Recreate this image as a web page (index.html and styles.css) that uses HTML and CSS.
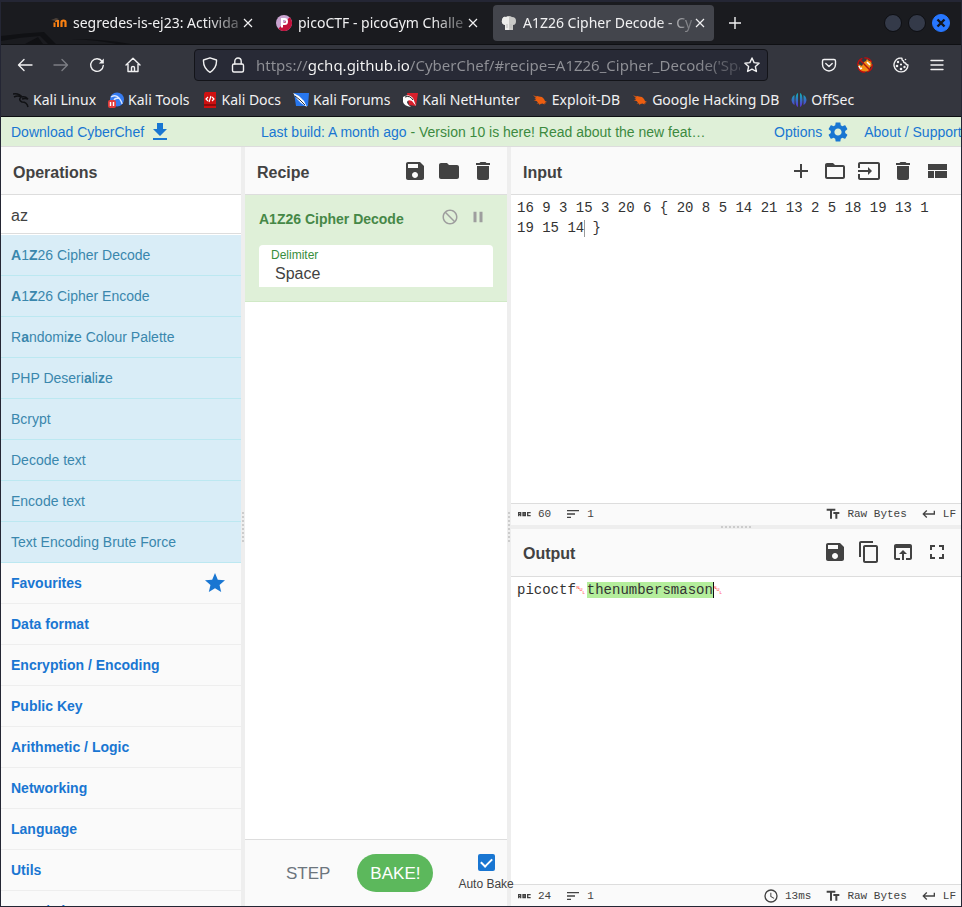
FILE: index.html
```html
<!DOCTYPE html>
<html lang="en">
<head>
<meta charset="utf-8">
<title>A1Z26 Cipher Decode - CyberChef</title>
<link rel="stylesheet" href="styles.css">
</head>
<body>
<svg class="sprite" aria-hidden="true">
  <symbol id="save" viewBox="0 0 24 24"><path d="M17 3H5c-1.11 0-2 .9-2 2v14c0 1.1.89 2 2 2h14c1.1 0 2-.9 2-2V7l-4-4zm-5 16c-1.66 0-3-1.34-3-3s1.34-3 3-3 3 1.34 3 3-1.34 3-3 3zm3-10H5V5h10v4z"/></symbol>
  <symbol id="folder" viewBox="0 0 24 24"><path d="M10 4H4c-1.1 0-1.99.9-1.99 2L2 18c0 1.1.9 2 2 2h16c1.1 0 2-.9 2-2V8c0-1.1-.9-2-2-2h-8l-2-2z"/></symbol>
  <symbol id="trash" viewBox="0 0 24 24"><path d="M6 19c0 1.1.9 2 2 2h8c1.1 0 2-.9 2-2V7H6v12zM19 4h-3.500l-1-1h-5l-1 1H5v2h14V4z"/></symbol>
  <symbol id="add" viewBox="0 0 24 24"><path d="M19 13h-6v6h-2v-6H5v-2h6V5h2v6h6v2z"/></symbol>
  <symbol id="folder-open" viewBox="0 0 24 24"><path d="M20 6h-8l-2-2H4c-1.100 0-1.990.9-1.990 2L2 18c0 1.100.9 2 2 2h16c1.100 0 2-.9 2-2V8c0-1.100-.9-2-2-2zm0 12H4V8h16v10z"/></symbol>
  <symbol id="input-icon" viewBox="0 0 24 24"><path d="M21 3.010H3c-1.100 0-2 .9-2 2V9h2V4.990h18v14.030H3V15H1v4.010c0 1.100.9 1.980 2 1.980h18c1.100 0 2-.88 2-1.980v-14c0-1.110-.9-2-2-2zM11 16l4-4-4-4v3H1v2h10v3z"/></symbol>
  <symbol id="layout" viewBox="0 0 24 24"><path d="M3 19h6v-7H3v7zm7 0h12v-7H10v7zM3 5v6h19V5H3z"/></symbol>
  <symbol id="copy" viewBox="0 0 24 24"><path d="M16 1H4c-1.100 0-2 .9-2 2v14h2V3h12V1zm3 4H8c-1.100 0-2 .9-2 2v14c0 1.100.9 2 2 2h11c1.100 0 2-.9 2-2V7c0-1.100-.9-2-2-2zm0 16H8V7h11v14z"/></symbol>
  <symbol id="open" viewBox="0 0 24 24"><path d="M19 4H5c-1.110 0-2 .9-2 2v12c0 1.100.89 2 2 2h4v-2H5V8h14v10h-4v2h4c1.100 0 2-.9 2-2V6c0-1.100-.89-2-2-2zm-7 6l-4 4h3v6h2v-6h3l-4-4z"/></symbol>
  <symbol id="full" viewBox="0 0 24 24"><path d="M7 14H5v5h5v-2H7v-3zm-2-4h2V7h3V5H5v5zm12 7h-3v2h5v-5h-2v3zM14 5v2h3v3h2V5h-5z"/></symbol>
  <symbol id="pause" viewBox="0 0 24 24"><path d="M6 19h4V5H6v14zm8-14v14h4V5h-4z"/></symbol>
  <symbol id="block" viewBox="0 0 24 24"><path d="M12 2C6.480 2 2 6.480 2 12s4.480 10 10 10 10-4.480 10-10S17.520 2 12 2zM4 12c0-4.420 3.580-8 8-8 1.850 0 3.550.63 4.900 1.690L5.690 16.900C4.630 15.550 4 13.850 4 12zm8 8c-1.850 0-3.550-.63-4.900-1.690L18.310 7.100C19.370 8.450 20 10.150 20 12c0 4.420-3.580 8-8 8z" transform="matrix(-1 0 0 1 24 0)"/></symbol>
  <symbol id="download" viewBox="0 0 24 24"><path d="M19 9h-4V3H9v6H5l7 7 7-7zM5 18v2h14v-2H5z"/></symbol>
  <symbol id="star" viewBox="0 0 24 24"><path d="M12 17.270L18.180 21l-1.640-7.030L22 9.240l-7.190-.61L12 2 9.190 8.630 2 9.240l5.460 4.730L5.820 21z"/></symbol>
  <symbol id="sort" viewBox="0 0 24 24"><path d="M3 18h6v-2H3v2zM3 6v2h18V6H3zm0 7h12v-2H3v2z"/></symbol>
  <symbol id="tt" viewBox="0 0 24 24"><path d="M2.500 4v3h5v12h3V7h5V4h-13zm19 5h-9v3h3v7h3v-7h3V9z"/></symbol>
  <symbol id="return" viewBox="0 0 24 24"><path d="M19 7v4H5.830l3.580-3.590L8 6l-6 6 6 6 1.410-1.410L5.830 13H21V7z"/></symbol>
  <symbol id="clock" viewBox="0 0 24 24"><path d="M12 2a10 10 0 1 0 0 20a10 10 0 1 0 0-20zm0 18a8 8 0 1 1 0-16a8 8 0 0 1 0 16zm.5-13H11v6l5.250 3.150.75-1.230-4.500-2.670z"/></symbol>
  <symbol id="letters" viewBox="0 0 24 24"><path fill="none" stroke="currentColor" stroke-width="2" d="M4 15.500V10h3v5.500M4 13h3M10.500 10h3.500v4.500h-3.500zM10.500 12.300H14M21 11v-1h-3.500v4.500H21v-1"/></symbol>
  <symbol id="gear" viewBox="0 0 24 24"><path d="M19.140 12.940c.04-.3.06-.61.06-.94 0-.32-.02-.64-.07-.94l2.030-1.580c.18-.14.23-.41.12-.61l-1.920-3.320c-.12-.22-.37-.29-.59-.22l-2.390.96c-.5-.38-1.030-.7-1.620-.94l-.36-2.540c-.04-.24-.24-.41-.48-.41h-3.840c-.24 0-.43.17-.47.41l-.36 2.540c-.59.24-1.130.57-1.620.94l-2.390-.96c-.22-.08-.47 0-.59.22L2.740 8.870c-.12.21-.08.47.12.61l2.030 1.580c-.05.3-.09.63-.09.94s.02.64.07.94l-2.030 1.580c-.18.14-.23.41-.12.61l1.920 3.320c.12.22.37.29.59.22l2.390-.96c.5.38 1.030.7 1.620.94l.36 2.540c.05.24.24.41.48.41h3.840c.24 0 .44-.17.47-.41l.36-2.540c.59-.24 1.130-.56 1.620-.94l2.390.96c.22.08.47 0 .59-.22l1.920-3.320c.12-.22.07-.47-.12-.61l-2.010-1.580zM12 15.600c-1.980 0-3.600-1.620-3.600-3.600s1.620-3.600 3.600-3.600 3.600 1.620 3.600 3.600-1.620 3.600-3.600 3.600z"/></symbol>
  <symbol id="close" viewBox="0 0 16 16"><path d="M4 4l8 8M12 4l-8 8" fill="none" stroke="currentColor" stroke-width="1.200"/></symbol>
  <symbol id="bug" viewBox="0 0 16 16"><path fill="#ec5e10" d="M1 3l3 1.500L5 4l2 .5 3 .5 2 2 1 2 2 1-2 .5 1 1.500-1.500-1 0 1.500-2-1-2 .5-1 1-.5-1.500-2.500 0 1.500-1-1.500-1.500-3-.5 2.500-.5-1.500-2 2 .5z"/></symbol>
</svg>

<header class="browser">
  <div class="tabs">
    <svg class="art" viewBox="0 0 130 42" aria-hidden="true"><path d="M0 34q24-3 43-4l12 12h-8l-8-8Q20 35 0 39zM24 42l13-7 5 7z" fill="#101114"/><path d="M70 37q32 0 60 5h-14q-20-4-46-5z" fill="#101114"/></svg>
    <div class="tab">
      <svg class="i16" viewBox="0 0 16 16"><path d="M3.500 12V7.500M7 12V5M4 6q3-1 3 1" fill="none" stroke="#f98012" stroke-width="2"/><path d="M10.500 12V7q0-1.500 2-1.500t2 1.500v5" fill="none" stroke="#f98012" stroke-width="2.200"/><path d="M0 5l5-2 3 1-4 2z" fill="#4b4038"/></svg>
      <span class="tab-title">segredes-is-ej23: Activida</span>
      <button class="tab-close" aria-label="Close tab"><svg class="i16"><use href="#close"/></svg></button>
    </div>
    <div class="tab">
      <svg class="i16" viewBox="0 0 16 16"><circle cx="8" cy="8" r="8" fill="#c9a3cf"/><path d="M13.700 2.300A8 8 0 0 1 2.300 13.700z" fill="#c3113a"/><path d="M6 12.500V4h2.500a2.500 2.500 0 0 1 0 5H6" fill="none" stroke="#fff" stroke-width="2"/></svg>
      <span class="tab-title">picoCTF - picoGym Challe</span>
      <button class="tab-close" aria-label="Close tab"><svg class="i16"><use href="#close"/></svg></button>
    </div>
    <div class="tab active">
      <svg class="i16" viewBox="0 0 16 16"><path d="M4 15V10Q0 9 1 5t4-3q3-2 6 0 4 0 4 4t-3 4v5z" fill="#c9c9c7"/><path d="M4 15V10Q0 9 1 5t4-3q2-1 3 0v13z" fill="#ededeb"/><path d="M6 9v4M10 9v4" stroke="#bbb"/></svg>
      <span class="tab-title">A1Z26 Cipher Decode - Cy</span>
      <button class="tab-close" aria-label="Close tab"><svg class="i16"><use href="#close"/></svg></button>
    </div>
    <button class="new-tab" aria-label="New tab"><svg class="i16" viewBox="0 0 16 16"><path d="M8 2v12M2 8h12" stroke="currentColor" stroke-width="1.400"/></svg></button>
    <div class="window-buttons">
      <button aria-label="Minimize"></button>
      <button aria-label="Maximize"></button>
      <button class="win-close" aria-label="Close"><svg viewBox="0 0 18 18"><path d="M5.500 5.500l7 7M12.500 5.500l-7 7" stroke="#14161c" stroke-width="2.400"/></svg></button>
    </div>
  </div>

  <div class="nav">
    <button aria-label="Back"><svg class="i16 line" viewBox="0 0 16 16"><path d="M15 8H2M7 2.500L1.500 8 7 13.500"/></svg></button>
    <button class="dim" aria-label="Forward"><svg class="i16 line" viewBox="0 0 16 16"><path d="M1 8h13M9 2.500L14.500 8 9 13.500"/></svg></button>
    <button aria-label="Reload"><svg class="i16 line" viewBox="0 0 16 16"><path d="M13.200 4.500A6.300 6.300 0 1 0 14.300 8.500"/><path d="M14.800 1.500v5h-5z" fill="currentColor" stroke="none"/></svg></button>
    <button aria-label="Home"><svg class="i16 line" viewBox="0 0 16 16"><path d="M1 8l7-6.800L15 8M3 7v7.500h10V7M6.500 14.500v-4q0-1 1.500-1t1.500 1v4"/></svg></button>
    <div class="url">
      <svg class="i16 line" viewBox="0 0 16 16"><path d="M8 .8L14.500 3q.5 8-6.500 12.300Q1 11 1.500 3z"/></svg>
      <svg class="i16 line" viewBox="0 0 16 16"><rect x="2.500" y="7" width="11" height="8" rx="1.500"/><path d="M4.800 7V4.200a3.200 3.200 0 0 1 6.400 0V7"/></svg>
      <input class="url-text" type="text" aria-label="Address" value="https://gchq.github.io/CyberChef/#recipe=A1Z26_Cipher_Decode('Spa">
      <button aria-label="Bookmark this page"><svg class="i16 line" viewBox="0 0 16 16"><path d="M8 1l2.100 4.600 5 .6-3.700 3.400 1 4.900L8 12.100l-4.400 2.400 1-4.900L.9 6.200l5-.6z"/></svg></button>
    </div>
    <button aria-label="Pocket"><svg class="i16 line" viewBox="0 0 16 16"><path d="M3 2.500h10q1.500 0 1.500 1.500v3.500a6.500 6.500 0 0 1-13 0V4Q1.500 2.500 3 2.500zM4.800 6.500L8 9.500l3.200-3"/></svg></button>
    <button aria-label="Proxy off"><svg class="i16" viewBox="0 0 16 16"><path d="M1 7l4 2 2-4 2-1 1-2 2 2 2 0 1 5-2 1-1 4-6 1-4-2z" fill="#f08c13"/><path d="M2 9l1 3 2-1M10 5l3 3" stroke="#fff" stroke-width="1.500" fill="none"/><path d="M2.800 2.800l10.400 10.400" stroke="#b31312" stroke-width="1.500"/><circle cx="8" cy="8" r="7.200" fill="none" stroke="#c40d0d" stroke-width="1.300" stroke-dasharray="9 2"/></svg></button>
    <button aria-label="Cookies"><svg class="i16 line" viewBox="0 0 16 16"><path d="M6 1.200A7 7 0 1 0 15 8q-2 0-2.500-2-2 0-2-2Q8.500 3 9 1.300 7.500 1 6 1.200z"/><g fill="currentColor" stroke="none"><circle cx="5" cy="5" r="1.200"/><circle cx="4" cy="9" r="1.300"/><circle cx="8" cy="7.500" r="1.100"/><circle cx="8" cy="12" r="1.300"/><circle cx="11.500" cy="10" r="1.200"/><circle cx="12.500" cy="2.500" r=".8"/></g></svg></button>
    <button aria-label="Menu"><svg class="i16 line" viewBox="0 0 16 16"><path d="M2 3.500h12M2 8h12M2 12.500h12"/></svg></button>
  </div>

  <nav class="bookmarks" aria-label="Bookmarks">
    <a href="#"><svg class="i16" viewBox="0 0 16 16"><path d="M0 2q6-1 9 3M1 5q4-2 7 0M8 5q-3 3 1 5 5 0 6 5M9 5q3-1 6 2-3-1-6 0" fill="none" stroke="#101114" stroke-width="1.500"/></svg>Kali Linux</a>
    <a href="#"><svg class="i16" viewBox="0 0 16 16"><circle cx="9" cy="7.500" r="7" fill="#367bf0"/><path d="M3 5q5-3 8 1t3 6M6 8q1-2 5-2" fill="none" stroke="#dce8ff" stroke-width="1.300"/><rect y="8" width="8" height="8" rx="2" fill="#e23b3b"/><path d="M2.500 10v4M5.500 10v4" stroke="#fff" stroke-width="1.400"/></svg>Kali Tools</a>
    <a href="#"><svg class="i16" viewBox="0 0 16 16"><path d="M3 0h11v16H2V2z" fill="#cf1111"/><path d="M2 13h12" stroke="#7a0808" stroke-width="1.500"/><path d="M6 5L4 7l2 2M10 5l2 2-2 2M9 4L7 10" stroke="#fff" fill="none" stroke-width="1.200"/></svg>Kali Docs</a>
    <a href="#"><svg class="i16" viewBox="0 0 16 16"><path d="M1 1h15l-1 13H3z" fill="#2777ef"/><path d="M0 1l6 3 5 5 3 6-6-4-4-4z" fill="#fff"/><path d="M2 4l5 4 5 5" stroke="#253346" fill="none"/></svg>Kali Forums</a>
    <a href="#"><svg class="i16" viewBox="0 0 16 16"><path d="M5 1h11l-2 13-7-1z" fill="#d8202c"/><path d="M1 5q6-4 10 1l3 8-4-5q-4-2-5 1 0 2 4 5-7-1-8-5z" fill="#fff"/><path d="M3 5q5-2 8 3" stroke="#222" fill="none"/></svg>Kali NetHunter</a>
    <a href="#"><svg class="i16"><use href="#bug"/></svg>Exploit-DB</a>
    <a href="#"><svg class="i16"><use href="#bug"/></svg>Google Hacking DB</a>
    <a href="#"><svg class="i16" viewBox="0 0 16 16"><defs><linearGradient id="og" x2="0" y2="1"><stop stop-color="#0fb3b5"/><stop offset="1" stop-color="#5b2fd6"/></linearGradient></defs><path d="M7 1v14Q4.500 14 4.500 8T7 1zM3.500 3v10Q1 12 .5 8 1 4 3.500 3zM9 1v14q2.500-1 2.500-7T9 1zM12.500 3v10q2.500-1 3-5-.5-4-3-5z" fill="url(#og)"/></svg>OffSec</a>
  </nav>
</header>

<div class="banner">
  <a href="#" class="banner-left">Download CyberChef <svg class="i24"><use href="#download"/></svg></a>
  <p class="notice"><a href="#">Last build: A month ago</a> - Version 10 is here! Read about the new features here</p>
  <div class="banner-right"><a href="#">Options <svg class="i24"><use href="#gear"/></svg></a><a href="#">About / Support</a></div>
</div>

<main class="workspace">
  <section class="operations">
    <header class="title"><h2>Operations</h2></header>
    <input class="search" type="text" aria-label="Search operations" value="az">
    <ul class="ops">
      <li><b>A</b>1<b>Z</b>26 Cipher Decode</li>
      <li><b>A</b>1<b>Z</b>26 Cipher Encode</li>
      <li>R<b>a</b>ndomi<b>z</b>e Colour Palette</li>
      <li>PHP Deseri<b>a</b>li<b>z</b>e</li>
      <li>Bcrypt</li>
      <li>Decode text</li>
      <li>Encode text</li>
      <li>Text Encoding Brute Force</li>
    </ul>
    <nav class="categories" aria-label="Categories">
      <a href="#">Favourites <svg class="i24"><use href="#star"/></svg></a>
      <a href="#">Data format</a>
      <a href="#">Encryption / Encoding</a>
      <a href="#">Public Key</a>
      <a href="#">Arithmetic / Logic</a>
      <a href="#">Networking</a>
      <a href="#">Language</a>
      <a href="#">Utils</a>
      <a href="#">Date / Time</a>
    </nav>
  </section>
  <div class="gutter"><i class="grip"></i></div>

  <section class="recipe">
    <header class="title"><h2>Recipe</h2>
      <div class="tools">
        <button aria-label="Save recipe"><svg class="i24"><use href="#save"/></svg></button>
        <button aria-label="Load recipe"><svg class="i24"><use href="#folder"/></svg></button>
        <button aria-label="Clear recipe"><svg class="i24"><use href="#trash"/></svg></button>
      </div>
    </header>
    <article class="step-card">
      <div class="step-head"><h3>A1Z26 Cipher Decode</h3>
        <button aria-label="Disable operation"><svg><use href="#block"/></svg></button>
        <button aria-label="Set breakpoint"><svg><use href="#pause"/></svg></button>
      </div>
      <div class="field">
        <label for="delimiter">Delimiter</label>
        <select id="delimiter"><option>Space</option></select>
      </div>
    </article>
    <footer class="controls">
      <button class="step">STEP</button>
      <button class="bake">BAKE!</button>
      <label class="auto"><input type="checkbox" checked><span>Auto Bake</span></label>
    </footer>
  </section>
  <div class="gutter"><i class="grip"></i></div>

  <div class="io">
    <section class="pane">
      <header class="title"><h2>Input</h2>
        <div class="tools">
          <button aria-label="Add input tab"><svg class="i24"><use href="#add"/></svg></button>
          <button aria-label="Open folder"><svg class="i24"><use href="#folder-open"/></svg></button>
          <button aria-label="Open file"><svg class="i24"><use href="#input-icon"/></svg></button>
          <button aria-label="Clear input and output"><svg class="i24"><use href="#trash"/></svg></button>
          <button aria-label="Reset layout"><svg class="i24"><use href="#layout"/></svg></button>
        </div>
      </header>
      <div class="editor">
        <textarea aria-label="Input text" spellcheck="false">16 9 3 15 3 20 6 { 20 8 5 14 21 13 2 5 18 19 13 1 19 15 14 }</textarea>
        <i class="caret"></i>
      </div>
      <footer class="status">
        <span><svg><use href="#letters"/></svg>60</span><span><svg><use href="#sort"/></svg>1</span>
        <span class="push"><svg><use href="#tt"/></svg>Raw Bytes</span><span><svg><use href="#return"/></svg>LF</span>
      </footer>
    </section>
    <div class="gutter row"><i class="grip"></i></div>
    <section class="pane">
      <header class="title"><h2>Output</h2>
        <div class="tools">
          <button aria-label="Save output"><svg class="i24"><use href="#save"/></svg></button>
          <button aria-label="Copy output"><svg class="i24"><use href="#copy"/></svg></button>
          <button aria-label="Replace input with output"><svg class="i24"><use href="#open"/></svg></button>
          <button aria-label="Maximise output"><svg class="i24"><use href="#full"/></svg></button>
        </div>
      </header>
      <output class="editor result">picoctf<span class="nul">␀</span><mark>thenumbersmason</mark><span class="nul">␀</span></output>
      <footer class="status">
        <span><svg><use href="#letters"/></svg>24</span><span><svg><use href="#sort"/></svg>1</span>
        <span class="push"><svg><use href="#clock"/></svg>13ms</span><span><svg><use href="#tt"/></svg>Raw Bytes</span><span><svg><use href="#return"/></svg>LF</span>
      </footer>
    </section>
  </div>
</main>
</body>
</html>
```
FILE: styles.css
```css
* { box-sizing: border-box; }
html { height: 100%; }
body {
  margin: 0;
  height: 100vh;
  display: flex;
  flex-direction: column;
  overflow: hidden;
  border: 1px solid #242634;
  border-top-width: 2px;
  background: #fff;
  color: #424242;
  font: 14px/20px "Liberation Sans", Arial, sans-serif;
}
button, input, select, textarea { font: inherit; color: inherit; }
button { flex: none; padding: 0; border: 0; background: none; display: flex; align-items: center; justify-content: center; }
a { color: inherit; text-decoration: none; }
h2, h3, p, ul { margin: 0; padding: 0; }
svg { display: block; flex: none; fill: currentColor; }
.sprite { position: absolute; width: 0; height: 0; }
.i16 { width: 16px; height: 16px; }
.i24 { width: 24px; height: 24px; }
.line { fill: none; stroke: currentColor; stroke-width: 1.4; stroke-linejoin: round; stroke-linecap: round; }

/* Browser window */
.browser { flex: none; background: #34363e; color: #f1f1f2; font: 14px/20px "Noto Sans", sans-serif; border-bottom: 1px solid #0d0e11; }
.tabs { position: relative; display: flex; align-items: center; gap: 4px; height: 43px; padding: 0 11px 0 42px; background: #1a1b1f; border-bottom: 1px solid #0f1013; }
.art { position: absolute; left: 0; bottom: 0; width: 130px; height: 42px; }
.tab { position: relative; display: flex; align-items: center; width: 221px; height: 36px; padding: 0 8px; border-radius: 4px; }
.tab.active { background: #43454c; }
.tab-title { flex: 1; margin-left: 6px; white-space: nowrap; mask-image: linear-gradient(90deg, #000 80%, #0004); }
.tab-close { width: 16px; }
.new-tab { width: 34px; height: 34px; }
.window-buttons { display: flex; gap: 6px; margin-left: auto; }
.window-buttons button { width: 18px; height: 18px; border-radius: 50%; background: #343a49; border: 1px solid #0d0e12; }
.window-buttons .win-close { background: #2777ff; border-color: #2777ff; }
.win-close svg { width: 18px; height: 18px; }
.nav { display: flex; align-items: center; gap: 20px; height: 40px; padding: 0 16px; }
.dim { color: #7c7e84; }
.url { flex: 1; display: flex; align-items: center; gap: 12px; height: 32px; margin: 0 33px; padding: 0 7px; border: 1px solid #131419; border-radius: 4px; background: #282a36; }
.url-text {
  flex: 1; min-width: 0; height: 30px; padding: 0; margin: 0 -8px 0 -2px; border: 0; outline: 0;
  font-size: 15px;
  color: transparent;
  background: linear-gradient(90deg, #8f9096 52px, #f8f8f8 52px, #f8f8f8 153px, #8f9096 153px, #8f9096 440px, #8f909633 490px);
  background-clip: text;
}
.bookmarks { display: flex; align-items: center; gap: 12px; height: 31px; padding: 0 12px 2px; white-space: nowrap; }
.bookmarks a { display: flex; align-items: center; gap: 4px; }

/* Banner */
.banner { flex: none; display: grid; grid-template-columns: 250fr 447fr 253fr; align-items: center; height: 30px; padding-left: 10px; background: #dff0d8; border-bottom: 1px solid #ddd; color: #3c8a3f; white-space: nowrap; overflow: hidden; }
.banner a { color: #1976d2; }
.banner-left, .banner-right, .banner-right a { display: flex; align-items: center; }
.banner-left { gap: 4px; }
.notice { overflow: hidden; text-overflow: ellipsis; }
.banner-right { gap: 14px; min-width: 0; padding-left: 66px; }
.banner-right a { gap: 4px; }

/* Workspace */
.workspace { flex: 1; min-height: 0; display: grid; grid-template-columns: 240fr 4px 262fr 4px 450fr; grid-template-rows: minmax(0, 1fr); }
.title { flex: none; display: flex; align-items: center; justify-content: space-between; height: 48px; padding: 4px 12px 0; background: #fafafa; border-bottom: 1px solid #ddd; }
.title h2 { font-size: 16px; }
.tools { display: flex; gap: 10px; margin-top: -4px; }
.gutter { display: flex; align-items: center; justify-content: center; background: #eee; }
.grip { width: 2px; height: 30px; background: repeating-linear-gradient(#ccc 0 2px, transparent 2px 4px); }
.row { flex: none; height: 4px; }
.row .grip { width: 30px; height: 2px; background: repeating-linear-gradient(90deg, #ccc 0 2px, transparent 2px 4px); }

.operations { min-width: 0; overflow: hidden; background: #fafafa; }
.search { display: block; width: 100%; height: 39px; padding: 4px 10px 0; border: 0; border-bottom: 1px solid #ddd; outline: 0; background: #fff; font-size: 16px; }
.ops { list-style: none; border-top: 1px solid #fff; color: #3a87ad; }
.ops li { height: 41px; padding: 10px; background: #d9edf7; border-bottom: 1px solid #bce8f1; }
.categories a { display: flex; align-items: center; justify-content: space-between; height: 41px; padding: 0 14px 0 10px; border-bottom: 1px solid #eee; color: #1976d2; font-weight: bold; }

.recipe { position: relative; z-index: 1; min-width: 0; display: flex; flex-direction: column; background: #fff; }
.step-card { padding: 14px; background: #dff0d8; border-bottom: 1px solid #d0e9c6; color: #468847; }
.step-head { display: flex; align-items: center; gap: 10px; height: 20px; }
.step-head h3 { flex: 1; font-size: 14px; }
.step-head button { color: #9e9e9e; margin-top: -4px; }
.step-head svg { width: 18px; height: 18px; }
.step-head button:last-child { margin-right: 6px; }
.field { height: 42px; margin-top: 16px; padding: 2px 12px; border-radius: 4px 4px 0 0; background: #fff; }
.field label { display: block; font-size: 12px; line-height: 16px; color: #388e3c; }
.field select { display: block; width: 100%; height: 22px; padding: 0 4px; border: 0; appearance: none; background: none; color: #424242; font-size: 16px; line-height: 22px; }
.controls { display: flex; align-items: center; height: 67px; margin-top: auto; padding-left: 41px; background: #fafafa; border-top: 1px solid #ddd; }
.step, .bake { font-size: 17px; height: 38px; padding-top: 2px; }
.step { color: #6c757d; }
.bake { width: 76px; margin-left: 27px; border-radius: 19px; background: #5cb85c; color: #fff; }
.auto { flex: none; display: flex; flex-direction: column; align-items: center; gap: 5px; margin-left: 25px; white-space: nowrap; font-size: 12px; line-height: 16px; }
.auto input { width: 17px; height: 17px; margin: 0; appearance: none; border-radius: 2px; background: #1976d2; display: grid; place-items: center; }
.auto input:checked::after { content: ""; width: 9px; height: 5px; margin-top: -3px; border: solid #fff; border-width: 0 0 2px 2px; transform: rotate(-45deg); }

.io { min-width: 0; display: flex; flex-direction: column; }
.pane { flex: 1; min-height: 0; display: flex; flex-direction: column; }
.editor { position: relative; flex: 1; min-height: 0; font: 14px/20px "Liberation Mono", monospace; color: #333; }
.editor textarea { display: block; width: 100%; height: 100%; padding: 3px 20px 0 6px; border: 0; outline: 0; resize: none; background: #fff; }
.caret { position: absolute; top: 25px; left: calc(6px + 8ch); width: 1px; height: 17px; background: #999; }
.result { display: block; padding: 3px 6px; }
.nul { display: inline-block; width: 11px; color: #f00; font-family: "DejaVu Sans", sans-serif; font-size: 12px; }
.result mark { margin-right: -1px; color: inherit; background: #b4ee9c; border-right: 1px solid #111; }
.status { flex: none; display: flex; align-items: center; gap: 14px; height: 22px; padding: 0 5px; background: #fafafa; border-top: 1px solid #ddd; font: 11px/20px "Liberation Mono", monospace; white-space: nowrap; }
.status span { display: flex; align-items: center; gap: 6px; }
.status svg { width: 16px; height: 16px; }
.push { margin-left: auto; }
```
